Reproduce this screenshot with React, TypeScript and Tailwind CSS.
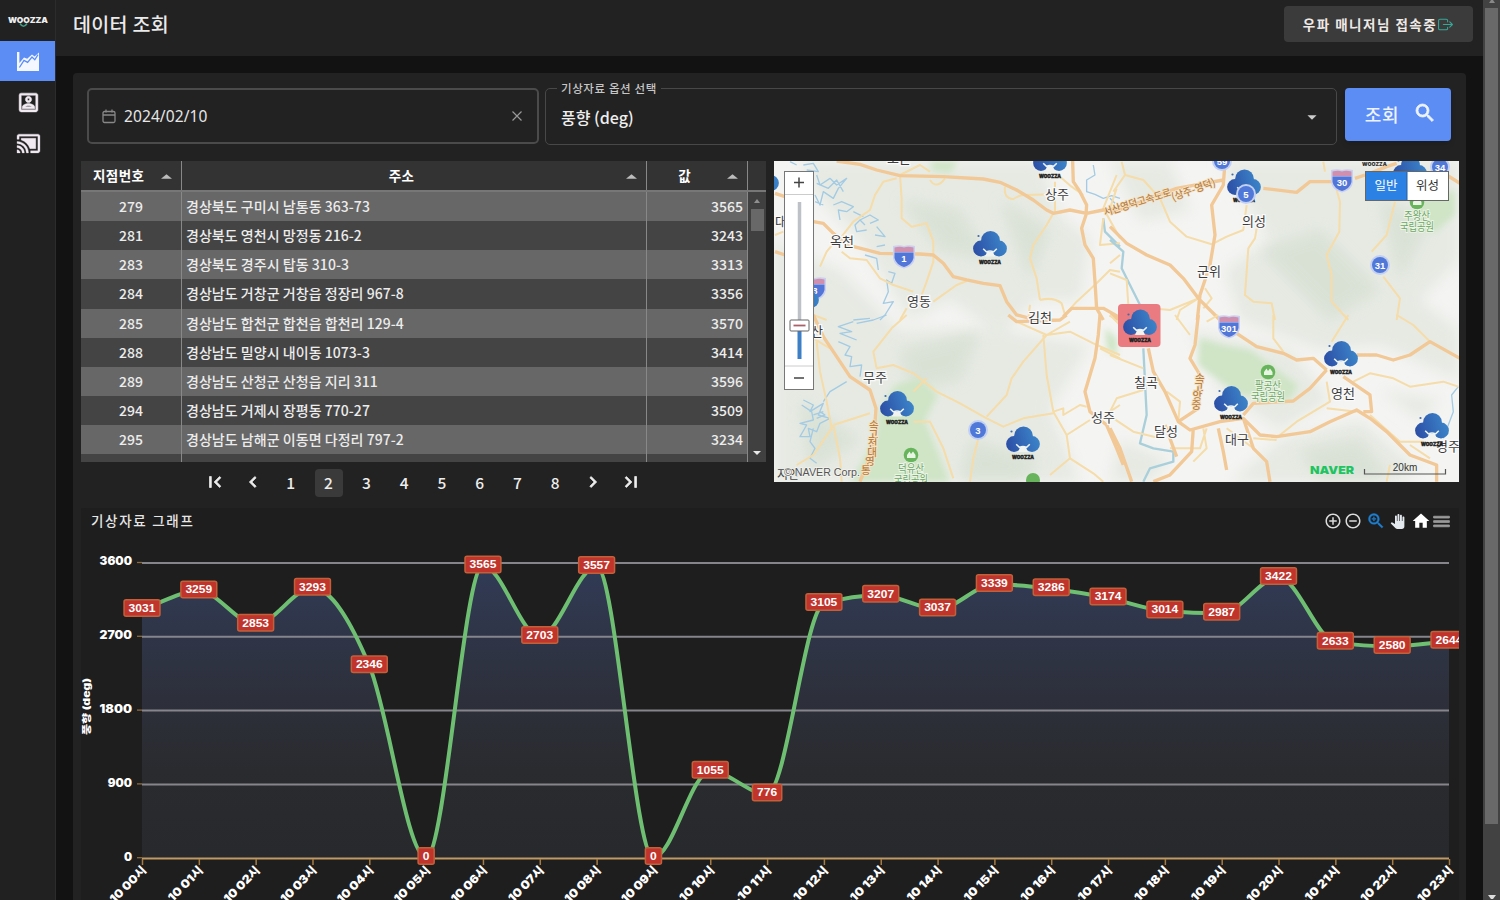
import React from 'react';
import {
  MdOutlinePortrait,
  MdCastConnected,
  MdSearch,
  MdArrowDropDown,
  MdChevronLeft,
  MdChevronRight,
  MdFirstPage,
  MdLastPage,
  MdAddCircleOutline,
  MdRemoveCircleOutline,
  MdZoomIn,
  MdPanTool,
  MdHome,
  MdMenu,
} from 'react-icons/md';
import { IoExitOutline } from 'react-icons/io5';

const KR = '"Noto Sans CJK KR", "Noto Sans", sans-serif';

/* Keeps a thickened icon's transparent bounding path unstroked. */
const BOLD = '[&_path[fill=none]]:stroke-none';

const ROWS: [string, string, string][] = [
  ['279', '경상북도 구미시 남통동 363-73', '3565'],
  ['281', '경상북도 영천시 망정동 216-2', '3243'],
  ['283', '경상북도 경주시 탑동 310-3', '3313'],
  ['284', '경상남도 거창군 거창읍 정장리 967-8', '3356'],
  ['285', '경상남도 합천군 합천읍 합천리 129-4', '3570'],
  ['288', '경상남도 밀양시 내이동 1073-3', '3414'],
  ['289', '경상남도 산청군 산청읍 지리 311', '3596'],
  ['294', '경상남도 거제시 장평동 770-27', '3509'],
  ['295', '경상남도 남해군 이동면 다정리 797-2', '3234'],
];

const VALUES = [
  3031, 3259, 2853, 3293, 2346, 0, 3565, 2703, 3557, 0, 1055, 776, 3105, 3207, 3037, 3339, 3286, 3174, 3014, 2987,
  3422, 2633, 2580, 2644,
];

/* ---------- Sidebar ---------- */

function AreaIcon() {
  return (
    <svg className="h-[21px] w-[24px]" viewBox="0 0 24 21">
      <path d="M1 1h2.400v11L8 6.400l3.200 1.400L16 3.400l2.600 2.200L23 1.500V20H1z" fill="#f4f7ff" />
      <path d="M3.400 16.500 8 9.400l3.600 2 4.400-5.400 2.800 2.800L22 3.600" fill="none" stroke="#5b8df5" strokeWidth="1.300" />
    </svg>
  );
}

function Logo() {
  return (
    <svg className="h-[14px] w-[42px]" viewBox="0 0 42 14">
      <path d="M13 9.500q3.500 5.500 7 0" fill="none" stroke="#3f9a80" strokeWidth="1.600" />
      <text x="1" y="9" textLength="40" lengthAdjust="spacingAndGlyphs" fontSize="8" fontWeight="900" fontFamily="Inter, sans-serif" fill="#eee">
        WOOZZA
      </text>
    </svg>
  );
}

function Sidebar() {
  return (
    <nav className="flex w-[56px] shrink-0 flex-col border-r border-[#2c2c2c] bg-[#212121]">
      <div className="flex h-[41px] items-center justify-center">
        <Logo />
      </div>
      <div className="flex h-[40px] items-center justify-center bg-[#5b8df5] pl-[1px]">
        <AreaIcon />
      </div>
      <div className="flex h-[42px] items-center justify-center pl-[1px] text-[#f1eaf1]">
        <MdOutlinePortrait size={25} className={BOLD} stroke="currentColor" strokeWidth={0.5} />
      </div>
      <div className="flex h-[40px] items-center justify-center pl-[1px] text-[#f1eaf1]">
        <MdCastConnected size={25} className={BOLD} stroke="currentColor" strokeWidth={0.3} />
      </div>
    </nav>
  );
}

/* ---------- Table ---------- */

function Sort() {
  return (
    <svg className="mt-[2px] h-[5px] w-[11px] shrink-0" viewBox="0 0 12 5">
      <path d="M0 5 6 0l6 5z" fill="#bcbcbc" />
    </svg>
  );
}

function Table() {
  const cell = 'border-r-[1.5px] border-[#888]';
  return (
    <div className="flex h-[301px] w-[685px] flex-col overflow-hidden bg-[#444]">
      <div className="flex h-[31px] shrink-0 border-b-2 border-[#777] bg-[#333] text-[13.5px] font-bold text-white">
        <div className={`flex w-[101px] items-center pr-[9px] ${cell}`}>
          <span className="flex-1 pl-[12px] tracking-[0.4px]">지점번호</span>
          <Sort />
        </div>
        <div className={`flex w-[465px] items-center pr-[9px] ${cell}`}>
          <span className="flex-1 pr-[5px] text-center tracking-[0.4px]">주소</span>
          <Sort />
        </div>
        <div className={`flex w-[101px] items-center pr-[9px] ${cell}`}>
          <span className="flex-1 pr-[5px] text-center">값</span>
          <Sort />
        </div>
      </div>
      <div className="flex h-[270px]">
        <div className="w-[667px]">
          {ROWS.map((r, i) => (
            <div
              key={r[0]}
              className={`flex h-[29.17px] text-[14px] leading-[28px] font-medium text-[#ececec] ${i % 2 ? 'bg-[#444]' : 'bg-[#676767]'}`}
            >
              <div className={`w-[101px] text-center ${cell}`}>{r[0]}</div>
              <div className={`w-[465px] pl-[4px] tracking-[0.04px] whitespace-nowrap ${cell}`}>{r[1]}</div>
              <div className={`w-[101px] pr-[4px] text-right ${cell}`}>{r[2]}</div>
            </div>
          ))}
          <div className="flex h-[8px]">
            <div className={`w-[101px] ${cell}`} />
            <div className={`w-[465px] ${cell}`} />
            <div className={`w-[101px] ${cell}`} />
          </div>
        </div>
        <div className="flex w-[18px] flex-col items-center justify-between bg-[#404040] pt-[7px] pb-[7px]">
          <div className="flex flex-col items-center gap-[6px]">
            <svg className="h-[4px] w-[6px]" viewBox="0 0 6 4">
              <path d="M0 4 3 0l3 4z" fill="#909090" />
            </svg>
            <div className="h-[22px] w-[13px] bg-[#686868]" />
          </div>
          <svg className="h-[4px] w-[8px]" viewBox="0 0 8 4">
            <path d="M0 0h8L4 4z" fill="#e8e8e8" />
          </svg>
        </div>
      </div>
    </div>
  );
}

function Pagination() {
  const box = 'flex h-[28px] w-[28px] items-center justify-center rounded-[4px]';
  const arrow = `${box} pb-[2px]`;
  return (
    <div className="flex h-[41px] items-center justify-center gap-[9.8px] pr-[1px] text-[15.5px] font-medium text-[#ededed]">
      <div className={arrow}><MdFirstPage size={22} className={BOLD} stroke="currentColor" strokeWidth={0.8} /></div>
      <div className={arrow}><MdChevronLeft size={22} className={BOLD} stroke="currentColor" strokeWidth={0.8} /></div>
      {[1, 2, 3, 4, 5, 6, 7, 8].map((n) => (
        <div key={n} className={`${box} ${n === 2 ? 'bg-[#3a3a3a]' : ''}`}>{n}</div>
      ))}
      <div className={arrow}><MdChevronRight size={22} className={BOLD} stroke="currentColor" strokeWidth={0.8} /></div>
      <div className={arrow}><MdLastPage size={22} className={BOLD} stroke="currentColor" strokeWidth={0.8} /></div>
    </div>
  );
}

/* ---------- Map ---------- */

/* The map is drawn in four tiles, each on its own grid of third-pixels. */
const TILES: { x: number; y: number; major: string; minor: string; river: string; stream: string }[] = [
  {
    x: 770,
    y: 155,
    major:
      'M200 18 L270 28 320 45 390 62 520 65 640 72 690 82 740 105 790 135 830 165 850 175 900 165 950 175 1000 165 1050 160 M130 200 L160 205 190 235 230 270 290 285 330 295 450 297 490 300 520 325 550 365 590 375 640 385 690 392 710 440 740 480 780 490 M908 18 L910 80 930 110 950 150 948 180 935 220 945 270 970 310 975 380 980 460 1000 495 M15 115 L45 125 M15 290 L45 300 M880 485 L905 460 1000 460 1050 488',
    minor:
      'M390 62 L395 130 395 190 425 215 470 205 490 260 490 320 470 380 455 420 M380 70 L340 80 315 120 300 165 250 200 215 245 M480 75 Q500 105 525 70 M705 95 Q700 130 730 132 Q750 120 760 120 L850 118 M850 175 L830 210 790 270 780 310 800 370 810 435 M855 80 L855 175 M870 65 L905 95 940 120 M195 260 L170 290 150 335 M215 290 L240 310 290 315 330 370 370 390 430 410 M490 440 L560 390 590 378 M410 460 L390 495 M810 435 Q850 425 875 445 L885 480 M780 450 L775 490 M1050 350 L1020 345 980 385 920 440 880 485 M1040 60 L1000 160 1050 250 M1000 190 L990 270 1050 265 M390 60 L450 30 480 50 M15 240 L40 230 M130 480 L170 495',
    river: 'M1000 190 L1005 230 1050 275',
    stream:
      'M100 30 L130 25 145 50 110 45 M60 20 L80 30 M140 60 L150 90 180 70 200 90 230 70 205 100 190 130 160 110 150 150 135 120 M140 85 L175 100 200 75 220 110 M135 140 L160 150 M190 150 L215 140 250 155 230 170 205 165 210 195 M250 170 L280 185 M270 195 L300 180 325 195 300 205 M290 225 L260 230 255 210 270 195 285 210 M320 215 L345 245 315 240 M345 270 L320 275 M285 300 L320 310 325 345 M355 350 L375 355 365 385 350 375 355 410 340 445 370 440 345 480 330 495 M970 30 L975 60 950 75 950 110 975 118 1000 130 1025 122 1050 130 M250 495 L300 490',
  },
  {
    x: 1110,
    y: 155,
    major:
      'M0 215 L50 265 110 300 180 330 220 370 265 430 330 495 M345 20 L340 90 305 150 315 240 300 330 270 420 262 495 M460 100 L560 112 600 80 680 80 M735 70 L765 60 M780 55 L830 35 860 25 M1010 60 L1050 85 M0 175 L200 100 340 75 M0 480 L30 495',
    minor:
      'M35 20 L45 60 10 110 M45 60 L100 75 150 130 180 200 230 245 305 268 L350 245 400 225 410 150 M440 220 L435 250 415 280 405 420 430 440 485 445 495 495 M640 20 L645 50 M680 105 L690 140 688 230 650 300 665 360 665 440 715 495 M855 140 L830 240 785 290 M820 365 L870 430 860 495 M0 325 L30 300 M0 355 L50 375 55 450 M265 430 L180 465 120 460 M265 430 L210 465 200 495 M285 400 L305 430 280 460 M0 160 L20 100',
    river: 'M0 255 L40 290 35 340 60 390 90 450 100 495',
    stream: 'M0 130 L15 145',
  },
  {
    x: 770,
    y: 315,
    major:
      'M130 0 L160 65 240 185 300 225 318 280 310 400 270 500 M990 0 L985 60 975 130 945 230 960 290 1010 330 1040 400 1060 450 M715 0 L740 20 870 15 890 0',
    minor:
      'M410 0 L365 40 310 110 320 160 370 150 430 175 500 230 570 265 650 310 700 335 760 310 850 295 M830 60 L760 140 725 190 710 240 650 305 M820 60 L830 180 850 290 890 360 900 430 970 475 1000 500 M830 60 L900 50 970 85 1050 120 M900 430 L840 480 M470 190 L430 230 M190 330 L300 295 M190 330 L210 430 215 500 M140 80 L150 170 170 260 185 340 130 420 80 450 M430 320 L480 320 520 400 550 490 M625 370 L610 430 600 500 M890 360 L960 315 M850 290 L880 280 880 300 930 270 950 275 M990 100 L1050 130 M130 70 L180 100 M740 20 L830 60 900 20 M1020 290 L1050 270',
    river: '',
    stream:
      'M250 20 L205 35 245 50 210 55 260 75 M260 25 L310 15 350 0 M205 80 L240 95 225 120 245 125 240 155 275 150 270 185 M230 200 L180 230 160 260 M100 255 L130 270 120 290 160 265 145 300 180 310 150 325 140 350 115 340 120 365 90 365 110 330 90 325 130 315 125 290 95 270 M150 290 L165 300 140 310 M130 340 L120 380 135 400 120 430 140 445 M130 300 L160 290',
  },
  {
    x: 1110,
    y: 315,
    major:
      'M265 0 L255 90 240 130 270 180 265 280 205 320 M115 100 L130 170 165 230 205 320 240 345 330 320 400 310 450 360 500 365 600 350 660 320 740 285 780 310 830 350 900 420 980 450 980 500 M380 55 L440 95 520 115 560 135 610 130 650 165 M740 120 L800 120 850 135 900 120 960 80 1050 130 M650 165 L600 220 550 258 430 265 400 300 M700 185 L780 240 785 290 760 290 M250 340 L245 410 180 480 130 500 M325 340 L340 410 350 465 M400 310 L430 400 470 440 480 500 M0 340 L30 400 65 500 M165 330 L200 425',
    minor:
      'M195 0 L240 60 M325 0 L290 20 M490 0 L490 70 520 110 M715 0 L665 80 M860 0 L910 30 960 80 M730 200 L780 175 850 190 900 215 1000 200 1045 215 M650 200 L660 260 560 320 510 360 M740 290 L650 280 M780 300 L870 380 940 380 M900 390 L960 430 M10 310 L70 350 150 370 M0 290 L20 250 100 225 M100 160 L0 120 M170 230 L210 260 205 320 M290 340 L270 400 180 400 M430 370 L500 375 M350 340 L430 400 M830 500 L840 450 M0 0 L30 30 M280 340 L290 400 250 440',
    river: 'M100 100 L110 300 90 385 130 400 190 410 190 440 120 460 100 500',
    stream: 'M1045 215 L1025 240 1030 290 1000 370',
  },
];

function Cloud({ x, y, bare }: { x: number; y: number; bare?: boolean }) {
  return (
    <g transform={`translate(${x} ${y})`}>
      <g fill="url(#cloud)">
        <circle cx="0.500" cy="-5" r="9.400" />
        <circle cx="-9" cy="3" r="7.900" />
        <circle cx="9" cy="3" r="7.900" />
        <path d="M-9-3H9V4L4.500 9.500H-4.500L-9 4z" />
      </g>
      <path d="M-6.800 3.200-3.600 6.400Q0 4.800 3.600 6.400L6.800 3.200" fill="none" stroke="#eef3f6" strokeWidth="1.500" />
      <path d="M-2.800 6H2.800L5 11H-5z" fill="#f0f3f0" />
      <circle cx="-11.500" cy="-9.500" r="1.100" fill="#3e6aae" />
      {!bare && (
        <text x="-11" y="18.300" textLength="22" lengthAdjust="spacingAndGlyphs" fontSize="5.200" fontWeight="900" fontFamily="Inter, sans-serif" fill="#222" stroke="#222" strokeWidth=".4">
          WOOZZA
        </text>
      )}
    </g>
  );
}

function Route({ x, y, n, shield }: { x: number; y: number; n: string; shield?: boolean }) {
  return (
    <g transform={`translate(${x} ${y})`}>
      {shield ? (
        <>
          <path d="M-11-11Q-5-12.500 0-11 5-12.500 11-11V1Q10 9 0 11.500-10 9-11 1z" fill="#c9d0f0" />
          <path d="M-9.500-9.500Q-4-11 0-9.500 4-11 9.500-9.500V-5H-9.500z" fill="#cf8fae" />
          <path d="M-9.500-4.500H9.500V1Q8 7.500 0 10-8 7.500-9.500 1z" fill="#5275d8" />
        </>
      ) : (
        <>
          <circle r="10" fill="#c3d0f2" />
          <circle r="8" fill="#4f78d8" />
        </>
      )}
      <text y={shield ? 5 : 3.5} textAnchor="middle" fontSize="9.500" fontWeight="700" fill="#fff" fontFamily='"Liberation Sans", sans-serif'>
        {n}
      </text>
    </g>
  );
}

function Park({ x, y, name }: { x: number; y: number; name: string }) {
  return (
    <g transform={`translate(${x} ${y})`}>
      <circle r="7.300" fill="#68b45c" />
      <path d="M-4 3V0L-1.500-3.500 0-1 2-3.500 4.500 0V3z" fill="#e8f5e2" />
      <g fontSize="11.500" textAnchor="middle" fill="#6ba765" stroke="#edf4e7" strokeWidth="2" paintOrder="stroke">
        <text y="17.500" textLength="26" lengthAdjust="spacingAndGlyphs">{name}</text>
        <text y="29" textLength="34" lengthAdjust="spacingAndGlyphs">국립공원</text>
      </g>
    </g>
  );
}

const CITIES: [string, number, number][] = [
  ['보은', 899, 163],
  ['상주', 1057, 199],
  ['옥천', 842, 246],
  ['영동', 919, 306],
  ['김천', 1040, 322],
  ['의성', 1254, 226],
  ['군위', 1209, 276],
  ['무주', 875, 382],
  ['칠곡', 1146, 387],
  ['성주', 1103, 422],
  ['달성', 1166, 436],
  ['대구', 1237, 444],
  ['영천', 1343, 398],
  ['경주', 1448, 451],
  ['산', 817, 336],
  ['대', 781, 226],
];

function MapView() {
  return (
    <svg className="h-[321px] w-[685px] shrink-0" viewBox="774 161 685 321" fontFamily={KR}>
      <defs>
        <linearGradient id="cloud" gradientUnits="userSpaceOnUse" x1="-16" y1="6" x2="16" y2="-4">
          <stop offset="0" stopColor="#2c4fa6" />
          <stop offset="1" stopColor="#3c85ca" />
        </linearGradient>
        <filter id="soft" x="-30%" y="-30%" width="160%" height="160%">
          <feGaussianBlur stdDeviation="7" />
        </filter>
        <filter id="edge" x="-30%" y="-30%" width="160%" height="160%">
          <feGaussianBlur stdDeviation="3" />
        </filter>
      </defs>
      <rect x="774" y="161" width="685" height="321" fill="#f4f4f2" />
      <g fill="#e6eae3" filter="url(#soft)">
        <path d="M800 161H1040L1060 215 1090 240 1080 300 1035 300 1000 335 950 300 910 320 860 240 820 200z" />
        <path d="M774 240 840 270 900 330 1000 330 1090 345 1050 410 1080 482H774z" />
        <path d="M1220 161H1459V260L1420 300 1459 330V380L1380 345 1320 350 1240 320 1225 270 1270 240z" />
        <path d="M1190 330 1290 350 1330 400 1280 430 1220 390z M1280 440 1360 420 1420 470 1400 482H1230z" />
        <path d="M1110 161h60l20 50-50 10z M1120 440l50 20-20 22h-40z M1380 390l60 10-20 20z" />
      </g>
      <g fill="#d2dccd" opacity=".6" filter="url(#soft)">
        <path d="M900 200l60 10 30 50-50-10z M1000 200l50 30-20 50z M900 350l80-20-20 50-50 10z M1260 250l60-20 60 60-50 30z M1380 200l50 20-30 60z M1300 450l60-10 30 40h-70z M970 440l70 20-20 22h-60z M800 400l60 40-50 30z" />
      </g>
      <g filter="url(#edge)" fill="#cfe5c6">
        <path d="M895 385 920 378 938 395 925 420 935 445 950 482H850L875 440 880 410z" />
        <path d="M1200 338 1222 345 1250 350 1275 368 1298 385 1290 400 1240 395 1198 365z" />
        <path d="M1420 200 1455 190V215L1435 232 1410 225z M930 161h28l-8 12-18-2z M1105 328l12 10v18l-10-6z" />
      </g>
      {TILES.map((t) => (
        <g key={`${t.x}-${t.y}`} transform={`translate(${t.x} ${t.y}) scale(0.3333)`} fill="none" strokeLinejoin="round">
          <path d={t.stream} stroke="#a3cbe4" strokeWidth="4" />
          <path d={t.river} stroke="#a9cfdb" strokeWidth="7" />
          <path d={t.minor} stroke="#f5dca8" strokeWidth="6" />
          <path d={t.major} stroke="#f1c896" strokeWidth="10" />
        </g>
      ))}
      <g fill="#b98244" stroke="#f6e3c6" strokeWidth="1.500" paintOrder="stroke" fontSize="10.500" fontWeight="500">
        <text transform="translate(1105 216) rotate(-17)" textLength="70" lengthAdjust="spacingAndGlyphs">서산영덕고속도로</text>
        <text transform="translate(1173 201) rotate(-20)" textLength="46" lengthAdjust="spacingAndGlyphs">(상주-영덕)</text>
        {['속', '고', '전', '대', '영', '통'].map((c, i) => (
          <text key={c} x={869 - (i > 3 ? (i - 3) * 4 : i * 0.6)} y={429 + i * 9}>{c}</text>
        ))}
        {['속', '고', '앙', '중'].map((c, i) => (
          <text key={c} x={1195 - i * 1.2} y={382 + i * 9}>{c}</text>
        ))}
      </g>
      <Park x={911} y={455} name="덕유산" />
      <Park x={1268} y={372} name="팔공산" />
      <Park x={1417} y={202} name="주왕산" />
      <circle cx="1033" cy="480" r="7" fill="#68b45c" />
      <Route x={904} y={257} n="1" shield />
      <Route x={815} y={289} n="3" shield />
      <Route x={1342} y={181} n="30" shield />
      <Route x={1229} y={327} n="301" shield />
      <Route x={1380} y={265} n="31" />
      <Route x={978} y={430} n="3" />
      <Route x={1222} y={161} n="59" />
      <Cloud x={762} y={180} bare />
      <Cloud x={802} y={297} bare />
      <g fontSize="13" textAnchor="middle" fill="#3d3d3d" stroke="#fafafa" strokeWidth="2.500" paintOrder="stroke">
        {CITIES.map(([name, x, y]) => (
          <text key={name} x={x} y={y}>{name}</text>
        ))}
      </g>
      <rect x="1118" y="304" width="42.500" height="43" rx="4" fill="#ea7b80" />
      <Cloud x={1050} y={160} />
      <Cloud x={990} y={245.5} />
      <Cloud x={1244} y={184} />
      <Route x={1246} y={194} n="5" />
      <Cloud x={1410} y={170} bare />
      <Route x={1440} y={167} n="34" />
      <text x="1362" y="166" fontSize="5.200" fontWeight="900" fontFamily="Inter, sans-serif" fill="#333">WOOZZA</text>
      <Cloud x={897} y={405.5} />
      <Cloud x={1023} y={441} />
      <Cloud x={1140} y={324} />
      <Cloud x={1341} y={355.5} />
      <Cloud x={1231} y={400.5} />
      <Cloud x={1432} y={427.5} />
      {/* zoom control */}
      <rect x="784.500" y="171.500" width="29" height="218" fill="#fff" stroke="#777" />
      <path d="M785 194.500h28M785 366h28" stroke="#ccc" />
      <path d="M794 182.500h10M799 177.500v10M794 378h10" stroke="#444" strokeWidth="1.500" />
      <path d="M799.500 202V320" stroke="#bfc1c8" strokeWidth="3.500" />
      <path d="M799.500 330V359" stroke="#3c7fc6" strokeWidth="4" />
      <rect x="790" y="320" width="19" height="11" rx="1" fill="#fff" stroke="#666" />
      <path d="M793.500 325.500h12" stroke="#a96067" strokeWidth="1.800" />
      {/* map type switch */}
      <rect x="1365.500" y="171.500" width="83" height="29" fill="#fff" stroke="#666" />
      <rect x="1366" y="172" width="41" height="28" fill="#2b82e4" />
      <path d="M1407 172v28" stroke="#2b5f9c" />
      <g fontSize="12.500" textAnchor="middle">
        <text x="1386" y="189.500" fill="#fff">일반</text>
        <text x="1427.500" y="189.500" fill="#333">위성</text>
      </g>
      <text x="777" y="479" fontSize="12" fill="#444">지안</text>
      <text x="784" y="476" textLength="76" lengthAdjust="spacingAndGlyphs" fontSize="11.500" fontFamily='"Liberation Sans", sans-serif' fill="#555" stroke="#f4f4f0" strokeWidth="1.500" paintOrder="stroke">
        © NAVER Corp.
      </text>
      <text x="1310" y="473.500" textLength="44" lengthAdjust="spacingAndGlyphs" fontSize="11" fontWeight="900" fontFamily="Inter, sans-serif" fill="#1fc462">
        NAVER
      </text>
      <text x="1405" y="471" textAnchor="middle" fontSize="10" fontFamily='"Liberation Sans", sans-serif' fill="#333">20km</text>
      <path d="M1364.500 469v5h81v-5" fill="none" stroke="#555" strokeWidth="1.200" />
    </svg>
  );
}

/* ---------- Chart ---------- */

const px = (i: number) => 142 + (i * 1307) / 23;
const py = (v: number) => 857.5 - (v * 294.5) / 3600;

/* Monotone cubic interpolation through every point. */
function curve() {
  const p = VALUES.map((v, i) => [px(i), py(v)]);
  const d = p.slice(1).map((q, i) => (q[1] - p[i][1]) / (q[0] - p[i][0]));
  const m = p.map((_, i) => {
    if (i === 0) return d[0];
    if (i === p.length - 1) return d[i - 1];
    if (d[i - 1] * d[i] <= 0) return 0;
    const s = Math.min(Math.abs(d[i - 1]), Math.abs(d[i]), Math.abs(d[i - 1] + d[i]) / 4);
    return Math.sign(d[i]) * 2 * s;
  });
  let out = `M${p[0][0]} ${p[0][1]}`;
  for (let i = 1; i < p.length; i++) {
    const h = (p[i][0] - p[i - 1][0]) / 3;
    out += `C${p[i - 1][0] + h} ${p[i - 1][1] + m[i - 1] * h} ${p[i][0] - h} ${p[i][1] - m[i] * h} ${p[i][0]} ${p[i][1]}`;
  }
  return out;
}

function Chart() {
  const line = curve();
  return (
    <svg className="block h-[362px] w-[1378px]" viewBox="81 538 1378 362">
      <defs>
        <linearGradient id="area" x1="0" y1="0" x2="0" y2="1">
          <stop offset="0" stopColor="#313b56" />
          <stop offset=".45" stopColor="#2d303b" />
          <stop offset=".7" stopColor="#2a2b2f" />
          <stop offset="1" stopColor="#28292c" />
        </linearGradient>
      </defs>
      <path d={`${line}L1449 858L142 858Z`} fill="url(#area)" />
      <g fontFamily="Inter, sans-serif" fontSize="11.500" fontWeight="900" fill="#fff">
        {[3600, 2700, 1800, 900, 0].map((v, i) => (
          <g key={v}>
            {v > 0 && <path d={`M142 ${563 + i * 73.8}H1449`} stroke="#85858b" strokeWidth="2" />}
            <path d={`M137 ${562.5 + i * 73.8}h5`} stroke="#8d6a3c" strokeWidth="1.300" />
            <text x="132" y={564.5 + i * 74} textAnchor="end" textLength={String(v).length * 8.1} lengthAdjust="spacingAndGlyphs">
              {v}
            </text>
          </g>
        ))}
      </g>
      <path d="M142 858.500H1449" stroke="#c09a63" strokeWidth="2" />
      <path d={line} fill="none" stroke="#6fbf73" strokeWidth="4" />
      {VALUES.map((v, i) => {
        const digits = String(v).length;
        const w = 9.5 + digits * 6.6;
        return (
          <g key={i}>
            <path d={`M${px(i) + 0.5} 859v6`} stroke="#a67c45" strokeWidth="1.500" />
            <text
              transform={`translate(${px(i) + 5} 871) rotate(-45)`}
              textAnchor="end"
              fontFamily={`Inter, ${KR}`}
              fontSize="11.500"
              fontWeight="900"
              fill="#fff"
              textLength="108"
              lengthAdjust="spacingAndGlyphs"
            >
              {`2024-02-10 ${String(i).padStart(2, '0')}시`}
            </text>
            <rect x={px(i) - w / 2} y={py(v) - 9.7} width={w} height="16.500" rx="2" fill="#c0342c" stroke="#c2603a" strokeWidth="1.500" />
            <text
              x={px(i)}
              y={py(v) + 2.4}
              textAnchor="middle"
              textLength={digits * 6.7}
              lengthAdjust="spacingAndGlyphs"
              fontSize="11"
              fontWeight="700"
              fontFamily='"Liberation Sans", sans-serif'
              fill="#fff"
            >
              {v}
            </text>
          </g>
        );
      })}
      <text transform="translate(89.500 735) rotate(-90)" textLength="57" lengthAdjust="spacingAndGlyphs" fontSize="9.500" fontWeight="900" fontFamily={`Inter, ${KR}`} fill="#fff">
        풍향 (deg)
      </text>
    </svg>
  );
}

function ChartTools() {
  return (
    <div className="flex h-[18px] items-center text-[#dcdcdc]">
      <MdAddCircleOutline size={18} />
      <MdRemoveCircleOutline size={18} className="ml-[2px]" />
      <MdZoomIn size={20} className={`ml-[4px] text-[#1d7fd0] ${BOLD}`} stroke="currentColor" strokeWidth={0.5} />
      <MdPanTool size={15} className="ml-[4px] text-[#e4e9ef]" />
      <MdHome size={20} className="ml-[6px] text-white" />
      <MdMenu size={21} className={`text-[#9a9a9a] ${BOLD}`} stroke="currentColor" strokeWidth={1} />
    </div>
  );
}

/* ---------- Page ---------- */

function Filters() {
  return (
    <div className="flex h-[57px] gap-[6px]">
      <div className="flex h-[56px] w-[452px] items-center rounded-[5px] border-2 border-[#4b4b4b] pr-[15px] pl-[13px]">
        <svg className="h-[15px] w-[14px]" viewBox="0 0 14 15" fill="none" stroke="#888" strokeWidth="1.300">
          <rect x="1" y="2.500" width="12" height="11" rx="1.500" />
          <path d="M1 6h12M4 .500v3M10 .500v3" />
        </svg>
        <span className="ml-[8px] flex-1 pt-[1px] text-[15.5px] tracking-[0.1px] text-[#e6e6e6]" style={{ fontFamily: '"Noto Sans", sans-serif' }}>
          2024/02/10
        </span>
        <svg className="h-[10px] w-[10px]" viewBox="0 0 10 10" stroke="#999" strokeWidth="1.200">
          <path d="M.500.500l9 9M9.500.500l-9 9" />
        </svg>
      </div>
      <div className="relative flex h-[57px] w-[792px] items-center justify-between rounded-[5px] border-[1.5px] border-[#484848] pr-[13px] pl-[15px]">
        <span className="absolute top-[-9px] left-[11px] bg-[#222] px-[4px] text-[11.5px] leading-[17px] font-medium tracking-[0.6px] whitespace-nowrap text-[#c6c6c6]">
          기상자료 옵션 선택
        </span>
        <span className="text-[16px] font-medium text-[#eee]">풍향 (deg)</span>
        <MdArrowDropDown size={22} className="text-[#ccc]" />
      </div>
      <button className="ml-[2px] flex h-[53px] w-[106px] items-center justify-center gap-[14px] rounded-[4px] bg-[#5b8df5] pl-[6px] text-[18px] font-medium tracking-[0.6px] text-[#eef3ff] shadow-md">
        조회
        <MdSearch size={24} className={`mb-[3px] ${BOLD}`} stroke="currentColor" strokeWidth={0.8} />
      </button>
    </div>
  );
}

function PageScrollbar() {
  return (
    <div className="flex h-full w-[17px] shrink-0 flex-col items-center justify-between bg-[#424242] pb-[1px]">
      <div className="flex flex-col items-center gap-[5px]">
        <svg className="h-[3px] w-[6px]" viewBox="0 0 6 3">
          <path d="M0 3 2 0h2l2 3z" fill="#888" />
        </svg>
        <div className="h-[816px] w-[13px] bg-[#696969]" />
      </div>
      <svg className="h-[4px] w-[8px]" viewBox="0 0 8 4">
        <path d="M0 0h8L5 4H3z" fill="#ddd" />
      </svg>
    </div>
  );
}

export default function App() {
  return (
    <div className="flex h-[900px] w-[1500px] overflow-hidden bg-[#121212]" style={{ fontFamily: KR }}>
      <Sidebar />
      <div className="flex min-w-0 flex-1 flex-col">
        <header className="flex h-[56px] shrink-0 items-center justify-between bg-[#222] pr-[10px] pb-[8px] pl-[17px]">
          <h1 className="text-[19.5px] font-medium tracking-[0.3px] text-[#eaeaea]">데이터 조회</h1>
          <div className="flex h-[36px] w-[189px] items-center justify-center rounded-[4px] bg-[#3b3b3b] text-[13.5px] font-bold tracking-[1.5px] whitespace-nowrap text-[#efe9e6]">
            우파 매니저님 접속중
            <IoExitOutline size={17} className="text-[#35a896]" stroke="currentColor" strokeWidth={14} />
          </div>
        </header>
        <main className="mt-[17px] ml-[17px] flex w-[1393px] flex-1 flex-col rounded-t-[4px] bg-[#222] pt-[15px] pl-[8px]">
          <div className="pl-[6px]">
            <Filters />
          </div>
          <div className="mt-[16px] flex h-[344px] gap-[8px]">
            <div className="flex w-[685px] flex-col">
              <Table />
              <Pagination />
            </div>
            <MapView />
          </div>
          <section className="mt-[3px] flex h-[392px] w-[1378px] flex-col overflow-hidden bg-[#1e1e1e]">
            <div className="flex h-[30px] shrink-0 items-center justify-between pr-[7px] pl-[10px]">
              <h2 className="pb-[6px] text-[13.5px] font-medium tracking-[1.7px] text-[#e6e6e6]">기상자료 그래프</h2>
              <div className="pb-[4px]"><ChartTools /></div>
            </div>
            <Chart />
          </section>
        </main>
      </div>
      <PageScrollbar />
    </div>
  );
}
